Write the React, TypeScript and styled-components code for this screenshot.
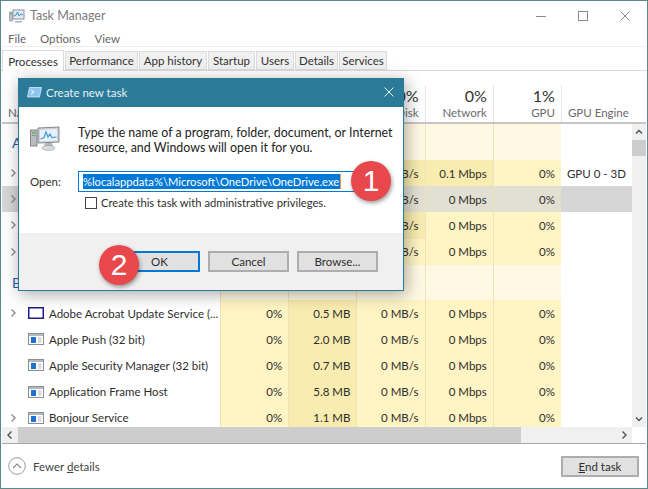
import React from "react";
import styled, { createGlobalStyle } from "styled-components";

const GlobalStyle = createGlobalStyle`
  html, body {
    margin: 0;
    padding: 0;
    background: #fff;
    overflow: hidden;
  }
  * {
    box-sizing: border-box;
  }
  svg {
    flex-shrink: 0;
  }
`;

type Tone = "plain" | "low" | "mid" | "group" | "selected" | "selectedPlain";

type Row = {
  key: string;
  chevron?: boolean;
  icon?: "app" | "adobe";
  name?: string;
  cpu?: string;
  memory?: string;
  disk?: string;
  network?: string;
  gpu?: string;
  engine?: string;
  selected?: boolean;
  hotDisk?: boolean;
  hotNetwork?: boolean;
};

const TABS = [
  { label: "Processes", width: 62 },
  { label: "Performance", width: 73 },
  { label: "App history", width: 68 },
  { label: "Startup", width: 47 },
  { label: "Users", width: 38 },
  { label: "Details", width: 43 },
  { label: "Services", width: 48 },
];

const APP_ROWS: Row[] = [
  { key: "a1", chevron: true, disk: "0 MB/s", network: "0.1 Mbps", gpu: "0%", engine: "GPU 0 - 3D", hotDisk: true, hotNetwork: true },
  { key: "a2", chevron: true, disk: "0 MB/s", network: "0 Mbps", gpu: "0%", selected: true },
  { key: "a3", chevron: true, disk: "0 MB/s", network: "0 Mbps", gpu: "0%", hotDisk: true },
  { key: "a4", chevron: true, disk: "0 MB/s", network: "0 Mbps", gpu: "0%" },
];

const BACKGROUND_ROWS: Row[] = [
  { key: "b1", chevron: true, icon: "adobe", name: "Adobe Acrobat Update Service (...", cpu: "0%", memory: "0.5 MB", disk: "0 MB/s", network: "0 Mbps", gpu: "0%" },
  { key: "b2", icon: "app", name: "Apple Push (32 bit)", cpu: "0%", memory: "2.0 MB", disk: "0 MB/s", network: "0 Mbps", gpu: "0%" },
  { key: "b3", icon: "app", name: "Apple Security Manager (32 bit)", cpu: "0%", memory: "0.7 MB", disk: "0 MB/s", network: "0 Mbps", gpu: "0%" },
  { key: "b4", icon: "app", name: "Application Frame Host", cpu: "0%", memory: "5.8 MB", disk: "0 MB/s", network: "0 Mbps", gpu: "0%" },
  { key: "b5", chevron: true, icon: "app", name: "Bonjour Service", cpu: "0%", memory: "1.1 MB", disk: "0 MB/s", network: "0 Mbps", gpu: "0%" },
];

const toneColor: Record<Tone, string> = {
  plain: "transparent",
  low: "#fff4c4",
  mid: "#f9ecb0",
  group: "#fff8e3",
  selected: "#e2e0d2",
  selectedPlain: "#d6d6d6",
};

const FONT = `Lato, Roboto, sans-serif`;

const Stage = styled.div`
  position: relative;
  width: 648px;
  height: 489px;
  font-family: ${FONT};
  font-size: 11.5px;
  color: #2e2e2e;
`;

const Window = styled.div`
  display: flex;
  flex-direction: column;
  height: 100%;
  padding: 0 1px;
  background: #fff;
  border: 1px solid #5d8a88;
`;

const TitleBar = styled.div`
  display: flex;
  align-items: center;
  flex: 0 0 29px;
  padding-left: 7px;
`;

const TitleText = styled.span`
  margin-left: 5px;
  font-size: 12.5px;
  color: #7c7c7c;
`;

const WindowButtons = styled.div`
  display: flex;
  align-items: center;
  gap: 32px;
  margin-left: auto;
  padding-right: 16px;
  color: #8a8a8a;
`;

const MenuBar = styled.div`
  display: flex;
  gap: 14px;
  flex: 0 0 17px;
  padding: 1px 0 0 6px;
  color: #666;
  border-bottom: 1px solid #ececec;
  line-height: 15px;
`;

const TabStrip = styled.div`
  display: flex;
  align-items: flex-end;
  flex: 0 0 24px;
  margin: 0 -1px;
  padding-left: 1px;
  border-bottom: 1px solid #d9d9d9;
`;

const Tab = styled.div<{ $active?: boolean; $width: number }>`
  display: flex;
  align-items: center;
  justify-content: center;
  width: ${(p) => p.$width}px;
  height: ${(p) => (p.$active ? 21 : 19)}px;
  margin-right: 1px;
  margin-bottom: ${(p) => (p.$active ? -1 : 0)}px;
  background: ${(p) => (p.$active ? "#fff" : "#f0f0f0")};
  border: 1px solid #dcdcdc;
  border-bottom: ${(p) => (p.$active ? "none" : "1px solid #dcdcdc")};
  position: relative;
  color: #333;
`;

const TableHead = styled.div`
  display: grid;
  grid-template-columns: 218px repeat(5, 68.2px) 72px;
  flex: 0 0 53px;
  padding-top: 14px;
  border-bottom: 2px solid #c6c6c6;
`;

const HeadCell = styled.div<{ $left?: boolean; $first?: boolean }>`
  display: flex;
  flex-direction: column;
  justify-content: flex-end;
  align-items: ${(p) => (p.$left ? "flex-start" : "flex-end")};
  padding: 0 6px 1px 6px;
  border-left: ${(p) => (p.$first ? "none" : "1px solid #e6e6e6")};
  overflow: hidden;
`;

const HeadValue = styled.span`
  font-size: 16px;
  line-height: 19px;
  color: #333;
`;

const HeadLabel = styled.span`
  line-height: 16px;
  color: #6a6a6a;
  white-space: nowrap;
`;

const BodyWrap = styled.div`
  display: flex;
  flex: 0 0 303px;
`;

const Rows = styled.div`
  flex: 0 0 630px;
  height: 303px;
  overflow: hidden;
`;

const RowGrid = styled.div<{ $height: number }>`
  display: grid;
  grid-template-columns: 218px repeat(5, 68.2px) 72px;
  height: ${(p) => p.$height}px;
`;

const NameCell = styled.div<{ $selected?: boolean }>`
  display: flex;
  align-items: center;
  min-width: 0;
  padding-left: 7px;
  background: ${(p) => (p.$selected ? "#d6d6d6" : "transparent")};
  white-space: nowrap;
  overflow: hidden;
`;

const ChevronSlot = styled.span`
  display: flex;
  flex: 0 0 19px;
  color: #8c8c8c;
`;

const ProcessName = styled.span`
  margin-left: 5px;
`;

const ValueCell = styled.div<{ $tone: Tone; $left?: boolean; $line?: boolean }>`
  display: flex;
  align-items: center;
  justify-content: ${(p) => (p.$left ? "flex-start" : "flex-end")};
  padding: 0 6px;
  background: ${(p) => toneColor[p.$tone]};
  border-left: ${(p) => (p.$line ? "1px solid #f0e2b8" : "none")};
  white-space: nowrap;
  overflow: hidden;
`;

const GroupName = styled.div`
  display: flex;
  align-items: flex-end;
  padding: 0 0 8px 10px;
  font-size: 14px;
  line-height: 18px;
  color: #1f5fa8;
  white-space: nowrap;
`;

const VScroll = styled.div`
  display: flex;
  flex-direction: column;
  align-items: center;
  flex: 0 0 14px;
  background: #f0f0f0;
  color: #505050;
`;

const ScrollArrowBox = styled.div`
  display: flex;
  align-items: center;
  justify-content: center;
  flex: 0 0 16px;
`;

const VThumb = styled.div`
  flex: 0 0 16px;
  width: 100%;
  background: #cdcdcd;
`;

const VTrackGap = styled.div`
  flex: 1;
`;

const HScroll = styled.div`
  display: flex;
  align-items: stretch;
  flex: 0 0 16px;
  color: #505050;
`;

const HTrack = styled.div`
  display: flex;
  align-items: stretch;
  flex: 0 0 630px;
  background: #f0f0f0;
`;

const HThumb = styled.div`
  flex: 0 0 503px;
  background: #cdcdcd;
`;

const HGap = styled.div`
  flex: 1;
`;

const Footer = styled.div`
  display: flex;
  align-items: center;
  flex: 1;
  padding: 0 7px 0 6px;
  border-top: 1px solid #a8a8a8;
`;

const FewerText = styled.span`
  margin-left: 7px;
  color: #444;
`;

const Underlined = styled.span`
  text-decoration: underline;
`;

const EndTask = styled.div`
  display: flex;
  align-items: center;
  justify-content: center;
  width: 78px;
  height: 21px;
  margin-left: auto;
  background: #e1e1e1;
  border: 2px solid #adadad;
`;

const Dialog = styled.div`
  position: absolute;
  left: 18px;
  top: 78px;
  display: flex;
  flex-direction: column;
  width: 386px;
  height: 213px;
  background: #fff;
  border: 1px solid #2b7a98;
  box-shadow: 2px 3px 16px rgba(0, 0, 0, 0.35);
`;

const DialogTitle = styled.div`
  display: flex;
  align-items: center;
  flex: 0 0 28px;
  padding: 0 9px 2px 8px;
  background: #2b7a98;
  color: #e6f1f5;
`;

const DialogTitleText = styled.span`
  margin-left: 4px;
  font-size: 11.5px;
`;

const DialogClose = styled.span`
  display: flex;
  margin-left: auto;
  color: #e6f1f5;
`;

const DialogBody = styled.div`
  display: flex;
  flex-direction: column;
  flex: 1;
  padding: 19px 0 0 11px;
`;

const IntroRow = styled.div`
  display: flex;
  align-items: flex-start;
  gap: 18px;
`;

const IntroText = styled.div`
  font-size: 12.4px;
  line-height: 14.5px;
  color: #222;
  white-space: nowrap;
`;

const OpenRow = styled.div`
  display: flex;
  align-items: center;
  margin-top: 16px;
`;

const OpenLabel = styled.span`
  flex: 0 0 48px;
`;

const OpenInput = styled.div`
  display: flex;
  align-items: center;
  width: 290px;
  height: 21px;
  padding-left: 4px;
  border: 1px solid #0078d7;
`;

const Selection = styled.span`
  height: 15px;
  font-size: 11.2px;
  line-height: 15px;
  padding-right: 1px;
  background: #0078d7;
  color: #fff;
  border-right: 1px solid #f0963c;
  white-space: nowrap;
`;

const CheckRow = styled.div`
  display: flex;
  align-items: center;
  gap: 4px;
  margin: 4px 0 0 55px;
  font-size: 11.2px;
`;

const CheckBox = styled.span`
  flex: 0 0 12px;
  height: 12px;
  background: #fff;
  border: 1px solid #444;
`;

const DialogFooter = styled.div`
  display: flex;
  justify-content: flex-end;
  gap: 8px;
  flex: 0 0 57px;
  padding: 18px 25px 0 0;
  background: #f0f0f0;
`;

const DialogButton = styled.div<{ $primary?: boolean }>`
  display: flex;
  align-items: center;
  justify-content: center;
  width: 81px;
  height: 21px;
  background: #e1e1e1;
  border: ${(p) => (p.$primary ? "2px solid #0078d7" : "2px solid #adadad")};
`;

const Badge = styled.div<{ $x: number; $y: number }>`
  position: absolute;
  left: ${(p) => p.$x - 20}px;
  top: ${(p) => p.$y - 20}px;
  display: flex;
  align-items: center;
  justify-content: center;
  width: 40px;
  height: 40px;
  border-radius: 50%;
  background: #e8484b;
  box-shadow: 1px 2px 4px rgba(0, 0, 0, 0.4);
  color: #fff;
  font-family: "Liberation Sans", sans-serif;
  font-size: 30px;
`;

const Chevron = ({ dir }: { dir: "left" | "right" | "up" | "down" }) => {
  const paths = {
    left: "M5.5 1.5 L2 5 L5.5 8.5",
    right: "M2.5 1.5 L6 5 L2.5 8.5",
    up: "M1 6.5 L4 3.5 L7 6.5",
    down: "M1 3.5 L4 6.5 L7 3.5",
  };
  return (
    <svg width="8" height="10" viewBox="0 0 8 10">
      <path d={paths[dir]} fill="none" stroke="currentColor" strokeWidth="1.4" />
    </svg>
  );
};

const AppIcon = () => (
  <svg width="16" height="12" viewBox="0 0 16 12">
    <rect x="0.5" y="0.5" width="15" height="11" fill="#fff" stroke="#8a8f96" />
    <rect x="1" y="1" width="14" height="2" fill="#b5b9be" />
    <rect x="3" y="4" width="5" height="6" fill="#1a73d0" />
    <path d="M10 5h3.5M10 7h3.5M10 9h3.5" stroke="#b5b9be" />
  </svg>
);

const AdobeIcon = () => (
  <svg width="16" height="12" viewBox="0 0 16 12">
    <rect x="0.75" y="0.75" width="14.5" height="10.5" fill="#fff" stroke="#1d1d8c" strokeWidth="1.5" />
  </svg>
);

const TaskManagerIcon = () => (
  <svg width="16" height="16" viewBox="0 0 16 16">
    <rect x="4" y="2" width="11" height="9" fill="#dfeaf3" stroke="#8b949b" />
    <path d="M5 8 L7 7 L8.5 4 L10 8 L12 6 L14 7" fill="none" stroke="#3a8fd0" />
    <rect x="0.5" y="4" width="3" height="9" fill="#b9bec3" stroke="#8b949b" strokeWidth="0.6" />
    <rect x="1.2" y="5" width="1.6" height="1.2" fill="#45b04a" />
    <path d="M6 13 h7 v1.5 h-7z" fill="#aeb3b8" />
  </svg>
);

const RunIcon = () => (
  <svg width="15" height="11" viewBox="0 0 15 11">
    <path d="M2.5 0.5 H14.5 L12.5 10 H0.5 Z" fill="#8cc6ee" stroke="#d3e9f6" strokeWidth="0.8" />
    <path d="M4 3 L7 5 L4 7" fill="none" stroke="#fff" strokeWidth="1" />
  </svg>
);

const SystemIcon = () => (
  <svg width="30" height="25" viewBox="0 0 30 25">
    <rect x="0.5" y="4" width="6.5" height="16" fill="#b9bcbf" stroke="#84888c" />
    <rect x="2" y="6" width="3.5" height="1.4" fill="#4fb04f" />
    <rect x="2" y="9" width="3.5" height="1" fill="#8a8d90" />
    <path d="M8 2 L29 1 V16 L8 17 Z" fill="#cfd2d5" stroke="#85898d" />
    <path d="M10 4 L27 3 V14.5 L10 15.5 Z" fill="#e6f1fa" />
    <path d="M10.5 13 L14 11.5 L16 6 L18 11 L20 8 L22 11.5 L26.5 11" fill="none" stroke="#4a98d8" strokeWidth="1.2" />
    <path d="M15 17 H22 L23 20 H14 Z" fill="#b5b8bb" />
    <ellipse cx="18.5" cy="22" rx="6.5" ry="2.5" fill="#d8dadc" stroke="#a0a3a6" strokeWidth="0.6" />
  </svg>
);

const CloseGlyph = ({ size }: { size: number }) => (
  <svg width={size} height={size} viewBox="0 0 10 10">
    <path d="M0.5 0.5 L9.5 9.5 M9.5 0.5 L0.5 9.5" stroke="currentColor" strokeWidth="1" fill="none" />
  </svg>
);

const ExpandCircle = () => (
  <svg width="18" height="18" viewBox="0 0 18 18">
    <circle cx="9" cy="9" r="8.3" fill="#fff" stroke="#9a9a9a" />
    <path d="M5 11 L9 7 L13 11" fill="none" stroke="#8a8a8a" strokeWidth="1.2" />
  </svg>
);

const ProcessRow = ({ row }: { row: Row }) => {
  const base: Tone = row.selected ? "selected" : "low";
  return (
    <RowGrid $height={26.2}>
      <NameCell $selected={row.selected}>
        <ChevronSlot>{row.chevron && <Chevron dir="right" />}</ChevronSlot>
        {row.icon === "app" && <AppIcon />}
        {row.icon === "adobe" && <AdobeIcon />}
        {row.name && <ProcessName>{row.name}</ProcessName>}
      </NameCell>
      <ValueCell $tone={base} $line>{row.cpu}</ValueCell>
      <ValueCell $tone={row.selected ? "selected" : "mid"} $line>{row.memory}</ValueCell>
      <ValueCell $tone={row.hotDisk ? "mid" : base} $line>{row.disk}</ValueCell>
      <ValueCell $tone={row.hotNetwork ? "mid" : base} $line>{row.network}</ValueCell>
      <ValueCell $tone={base} $line>{row.gpu}</ValueCell>
      <ValueCell $tone={row.selected ? "selectedPlain" : "plain"} $left>{row.engine}</ValueCell>
    </RowGrid>
  );
};

const GroupRow = ({ label, height }: { label: string; height: number }) => (
  <RowGrid $height={height}>
    <GroupName>{label}</GroupName>
    <ValueCell $tone="group" $line />
    <ValueCell $tone="group" $line />
    <ValueCell $tone="group" $line />
    <ValueCell $tone="group" $line />
    <ValueCell $tone="group" $line />
    <ValueCell $tone="plain" />
  </RowGrid>
);

export default function App() {
  return (
    <>
      <GlobalStyle />
      <Stage>
        <Window>
          <TitleBar>
            <TaskManagerIcon />
            <TitleText>Task Manager</TitleText>
            <WindowButtons>
              <svg width="10" height="10" viewBox="0 0 10 10">
                <path d="M0 5.5 H10" stroke="currentColor" />
              </svg>
              <svg width="10" height="10" viewBox="0 0 10 10">
                <rect x="0.5" y="0.5" width="9" height="9" fill="none" stroke="currentColor" />
              </svg>
              <CloseGlyph size={10} />
            </WindowButtons>
          </TitleBar>
          <MenuBar>
            <span>File</span>
            <span>Options</span>
            <span>View</span>
          </MenuBar>
          <TabStrip>
            {TABS.map((tab, i) => (
              <Tab key={tab.label} $active={i === 0} $width={tab.width}>
                {tab.label}
              </Tab>
            ))}
          </TabStrip>
          <TableHead>
            <HeadCell $left $first>
              <HeadLabel>Name</HeadLabel>
            </HeadCell>
            <HeadCell>
              <HeadValue>3%</HeadValue>
              <HeadLabel>CPU</HeadLabel>
            </HeadCell>
            <HeadCell>
              <HeadValue>42%</HeadValue>
              <HeadLabel>Memory</HeadLabel>
            </HeadCell>
            <HeadCell>
              <HeadValue>0%</HeadValue>
              <HeadLabel>Disk</HeadLabel>
            </HeadCell>
            <HeadCell>
              <HeadValue>0%</HeadValue>
              <HeadLabel>Network</HeadLabel>
            </HeadCell>
            <HeadCell>
              <HeadValue>1%</HeadValue>
              <HeadLabel>GPU</HeadLabel>
            </HeadCell>
            <HeadCell $left>
              <HeadLabel>GPU Engine</HeadLabel>
            </HeadCell>
          </TableHead>
          <BodyWrap>
            <Rows>
              <GroupRow label="Apps (4)" height={36} />
              {APP_ROWS.map((row) => (
                <ProcessRow key={row.key} row={row} />
              ))}
              <GroupRow label="Background processes (58)" height={35.2} />
              {BACKGROUND_ROWS.map((row) => (
                <ProcessRow key={row.key} row={row} />
              ))}
            </Rows>
            <VScroll>
              <ScrollArrowBox>
                <Chevron dir="up" />
              </ScrollArrowBox>
              <VThumb />
              <VTrackGap />
              <ScrollArrowBox>
                <Chevron dir="down" />
              </ScrollArrowBox>
            </VScroll>
          </BodyWrap>
          <HScroll>
            <HTrack>
              <ScrollArrowBox>
                <Chevron dir="left" />
              </ScrollArrowBox>
              <HThumb />
              <HGap />
              <ScrollArrowBox>
                <Chevron dir="right" />
              </ScrollArrowBox>
            </HTrack>
          </HScroll>
          <Footer>
            <ExpandCircle />
            <FewerText>
              Fewer <Underlined>d</Underlined>etails
            </FewerText>
            <EndTask>
              <span>
                <Underlined>E</Underlined>nd task
              </span>
            </EndTask>
          </Footer>
        </Window>

        <Dialog>
          <DialogTitle>
            <RunIcon />
            <DialogTitleText>Create new task</DialogTitleText>
            <DialogClose>
              <CloseGlyph size={10} />
            </DialogClose>
          </DialogTitle>
          <DialogBody>
            <IntroRow>
              <SystemIcon />
              <IntroText>
                Type the name of a program, folder, document, or Internet
                <br />
                resource, and Windows will open it for you.
              </IntroText>
            </IntroRow>
            <OpenRow>
              <OpenLabel>Open:</OpenLabel>
              <OpenInput>
                <Selection>%localappdata%\Microsoft\OneDrive\OneDrive.exe</Selection>
              </OpenInput>
            </OpenRow>
            <CheckRow>
              <CheckBox />
              <span>Create this task with administrative privileges.</span>
            </CheckRow>
          </DialogBody>
          <DialogFooter>
            <DialogButton $primary>OK</DialogButton>
            <DialogButton>Cancel</DialogButton>
            <DialogButton>Browse...</DialogButton>
          </DialogFooter>
        </Dialog>

        <Badge $x={371} $y={181}>1</Badge>
        <Badge $x={119} $y={265}>2</Badge>
      </Stage>
    </>
  );
}
